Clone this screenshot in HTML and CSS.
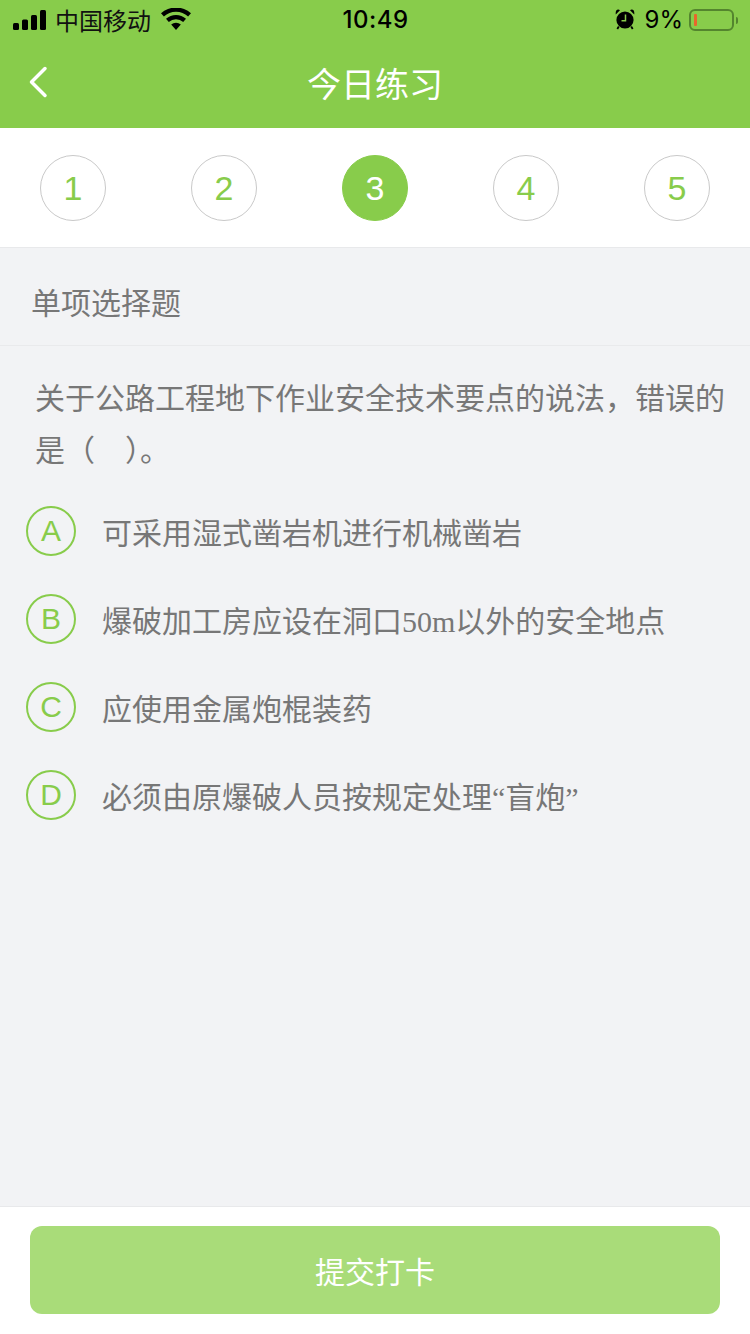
FILE: index.html
```html
<!DOCTYPE html>
<html lang="zh-CN">
<head>
<meta charset="utf-8">
<title>今日练习</title>
<link rel="stylesheet" href="styles.css">
</head>
<body>
<div class="page">
  <header class="top">
    <div class="status">
      <div class="status-left">
        <svg class="signal" width="35" height="20" viewBox="0 0 35 20"><rect x="0" y="13" width="6" height="7" rx="1.5"/><rect x="9" y="9.500" width="6" height="10.500" rx="1.500"/><rect x="18" y="5" width="6" height="15" rx="1.500"/><rect x="27" y="0" width="6" height="20" rx="1.500"/></svg>
        <span class="carrier">中国移动</span>
        <svg class="wifi" width="30" height="22" viewBox="0 0 30 22"><path d="M15 22 10.200 16.600a7 7 0 0 1 9.600 0Z"/><path d="M7.800 13.900 5 10.800a15 15 0 0 1 20 0l-2.800 3.100a10.800 10.800 0 0 0-14.400 0Z"/><path d="M2.900 8.500 0 5.300a22.300 22.300 0 0 1 30 0l-2.900 3.200a18 18 0 0 0-24.200 0Z"/></svg>
      </div>
      <div class="time">10:49</div>
      <div class="status-right">
        <svg class="alarm" width="20" height="21" viewBox="0 0 20 21"><path d="M0.800 5.500 5 1.200C3.500-.2 0-.1.800 5.500ZM19.200 5.500 15 1.200c1.500-1.400 5-1.300 4.200 4.300Z"/><circle cx="10" cy="11" r="8.600"/><path d="M3.800 17.500 2.300 20M16.200 17.500 17.700 20" stroke="#000" stroke-width="1.800" fill="none"/><path d="M10.500 5.500v6.300H6.500" stroke="#88cc4b" stroke-width="1.500" fill="none"/></svg>
        <span class="pct">9%</span>
        <span class="battery"><span class="battery-level"></span></span>
        <span class="battery-tip"></span>
      </div>
    </div>
    <nav class="nav">
      <svg class="back" width="20" height="32" viewBox="0 0 20 32"><path d="M17 2.500 3.500 16 17 29.500" fill="none" stroke="#fff" stroke-width="3.500" stroke-linecap="round" stroke-linejoin="round"/></svg>
      <h1 class="title">今日练习</h1>
    </nav>
  </header>

  <div class="steps">
    <div class="step">1</div>
    <div class="step">2</div>
    <div class="step step-active">3</div>
    <div class="step">4</div>
    <div class="step">5</div>
  </div>

  <main class="main">
    <div class="kind">单项选择题</div>
    <p class="question">关于公路工程地下作业安全技术要点的说法，错误的是（　）。</p>
    <ul class="options">
      <li class="option"><span class="letter">A</span><span class="option-text">可采用湿式凿岩机进行机械凿岩</span></li>
      <li class="option"><span class="letter">B</span><span class="option-text">爆破加工房应设在洞口50m以外的安全地点</span></li>
      <li class="option"><span class="letter">C</span><span class="option-text">应使用金属炮棍装药</span></li>
      <li class="option"><span class="letter">D</span><span class="option-text">必须由原爆破人员按规定处理“盲炮”</span></li>
    </ul>
  </main>

  <footer class="footer">
    <button class="submit" type="button">提交打卡</button>
  </footer>
</div>
</body>
</html>
```
FILE: styles.css
```css
* { box-sizing: border-box; }
html, body { margin: 0; padding: 0; }
body { font-family: "Noto Sans CJK SC", "Noto Sans", sans-serif; background: #f2f3f5; }
.page { width: 750px; height: 1334px; display: flex; flex-direction: column; overflow: hidden; }

.top { background: #88cc4b; height: 128px; flex: none; }
.status { height: 40px; display: grid; grid-template-columns: 1fr auto 1fr; align-items: center; padding: 0 12px 0 13px; color: #000; }
.status-left { display: flex; align-items: center; }
.signal { margin-top: -1px; }
.carrier { font-size: 24px; line-height: 40px; margin-left: 7px; color: #111; }
.wifi { margin-left: 10px; margin-top: -2px; }
.time { font-family: Inter, "Liberation Sans", sans-serif; font-size: 24px; font-weight: 500; line-height: 40px; letter-spacing: 0.5px; }
.status-right { display: flex; align-items: center; justify-content: flex-end; }
.alarm { margin-right: 10px; margin-top: -2px; }
.pct { font-family: Inter, "Liberation Sans", sans-serif; font-size: 24px; line-height: 40px; margin-right: 6px; }
.battery { width: 45px; height: 22px; border: 2px solid #54852e; border-radius: 6px; padding: 3px; display: flex; }
.battery-level { width: 3px; height: 12px; background: #e8662c; border-radius: 1px; }
.battery-tip { width: 2px; height: 7px; background: #54852e; margin-left: 2px; border-radius: 0 2px 2px 0; }

.nav { position: relative; height: 88px; display: flex; align-items: center; justify-content: center; }
.back { position: absolute; left: 28px; top: 26px; }
.title { margin: 0; font-size: 34px; font-weight: 400; color: #fff; line-height: 88px; margin-top: -2px; }

.steps { flex: none; height: 120px; background: #fff; border-bottom: 1px solid #e8e9eb; display: flex; justify-content: space-between; align-items: flex-start; padding: 27px 40px 0; }
.step { width: 66px; height: 66px; border: 1px solid #c9c9c9; border-radius: 50%; display: flex; align-items: center; justify-content: center; color: #88cc4b; font-family: "Liberation Sans", sans-serif; font-size: 34px; }
.step-active { background: #88cc4b; border-color: #88cc4b; color: #fff; }

.main { flex: 1; min-height: 0; }
.kind { height: 98px; border-bottom: 1px solid #e9eaec; padding: 0 31px; font-size: 30px; line-height: 106px; color: #777; overflow: hidden; }
.question { margin: 0; padding: 24px 25px 0 35px; font-size: 30px; line-height: 52px; color: #777; }
.options { list-style: none; margin: 13px 0 0; padding: 0 0 0 26px; }
.option { height: 88px; display: flex; align-items: center; }
.letter { flex: none; width: 50px; height: 50px; border: 2px solid #88cc4b; border-radius: 50%; display: flex; align-items: center; justify-content: center; color: #88cc4b; font-family: "Liberation Sans", sans-serif; font-size: 30px; }
.option-text { margin-left: 26px; font-size: 30px; color: #777; font-family: "Liberation Serif", "Noto Sans CJK SC", serif; white-space: nowrap; }

.footer { flex: none; height: 128px; background: #fff; border-top: 1px solid #e8e9eb; padding: 19px 30px 0; }
.submit { display: block; width: 690px; height: 88px; border: 0; padding: 0; border-radius: 12px; background: #a9dc79; color: #fff; font-family: "Noto Sans CJK SC", sans-serif; font-size: 30px; }
```
